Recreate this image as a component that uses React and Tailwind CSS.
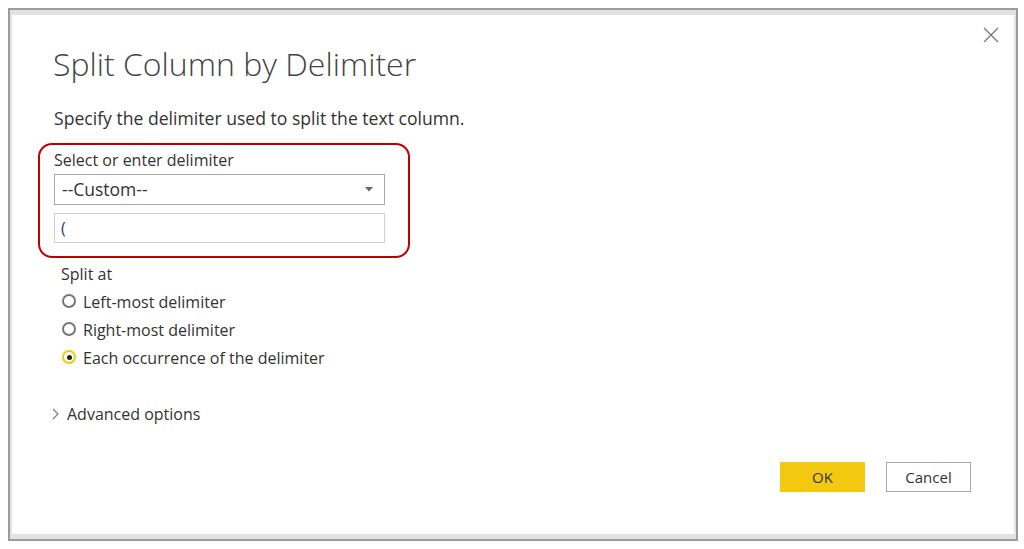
import React from 'react';

const font = { fontFamily: '"Open Sans", "Noto Sans", sans-serif' };

const Radio = ({ checked, label }) => (
  <label className="flex items-center h-[28px] text-[16px] text-[#333]">
    {checked ? (
      <span className="w-[14px] h-[14px] rounded-full border-2 border-[#f2c811] bg-white flex items-center justify-center">
        <span className="w-[5px] h-[5px] rounded-full bg-[#222]" />
      </span>
    ) : (
      <span className="w-[14px] h-[14px] rounded-full border-2 border-[#777] bg-white" />
    )}
    <span className="ml-[7px] mt-[2px]">{label}</span>
  </label>
);

const App = () => {
  return (
    <div className="w-[1024px] h-[549px] bg-white pl-2 pt-2" style={font}>
      <div className="w-[1010px] h-[533px] border-2 border-[#9c9c9c]">
        <div className="relative h-full border-x-2 border-t-[5px] border-b-[5px] border-[#e2e2e2] pl-[26px]">
          {/* close */}
          <button className="absolute top-[12px] right-[15px] w-[16px] h-[16px]">
            <svg viewBox="0 0 16 16" className="w-[16px] h-[16px]">
              <path d="M1 1 L15 15 M15 1 L1 15" stroke="#777" strokeWidth="1.3" fill="none" />
            </svg>
          </button>

          <h1 className="ml-[15px] mt-[29px] text-[32px] leading-[40px] font-light text-[#444]">
            Split Column by Delimiter
          </h1>
          <p className="ml-[16px] mt-[22px] text-[17.6px] leading-6 text-[#333]">
            Specify the delimiter used to split the text column.
          </p>

          <div className="mt-[13px] w-[372px] h-[115px] border-2 border-[#c00000] rounded-[14px] pl-[14px] pt-[5px]">
            <div className="text-[16px] leading-5 text-[#333]">Select or enter delimiter</div>
            <div className="mt-[4px] w-[331px] h-[31px] border border-[#a8a8a8] flex items-center justify-between pl-[7px] pr-[11px] text-[17.5px] text-[#333]">
              <span>--Custom--</span>
              <svg viewBox="0 0 8 5" className="w-[8px] h-[5px]">
                <path d="M0 0 L8 0 L4 4.5 Z" fill="#666" />
              </svg>
            </div>
            <div className="mt-[8px] w-[331px] h-[30px] border border-[#cfcfcf] flex items-center pl-[6px] text-[16px] text-[#1f3d66]">
              (
            </div>
          </div>

          <div className="ml-[23px] mt-[4px] text-[16px] leading-6 text-[#333]">Split at</div>
          <div className="ml-[24px] mt-[1px]">
            <Radio label="Left-most delimiter" />
            <Radio label="Right-most delimiter" />
            <Radio checked label="Each occurrence of the delimiter" />
          </div>

          <div className="ml-[14px] mt-[31px] flex items-center h-6 text-[16px] text-[#333]">
            <svg viewBox="0 0 7 12" className="w-[7px] h-[12px]">
              <path d="M1 1 L6 6 L1 11" stroke="#777" strokeWidth="1.1" fill="none" />
            </svg>
            <span className="ml-[8px]">Advanced options</span>
          </div>

          <div className="mt-[36px] mr-[43px] flex justify-end gap-[21px]">
            <button className="w-[85px] h-[30px] bg-[#f2c811] text-[15px] text-[#333]">OK</button>
            <button className="w-[85px] h-[30px] border border-[#a8a8a8] bg-white text-[15px] text-[#333]">
              Cancel
            </button>
          </div>
        </div>
      </div>
    </div>
  );
};

export default App;
